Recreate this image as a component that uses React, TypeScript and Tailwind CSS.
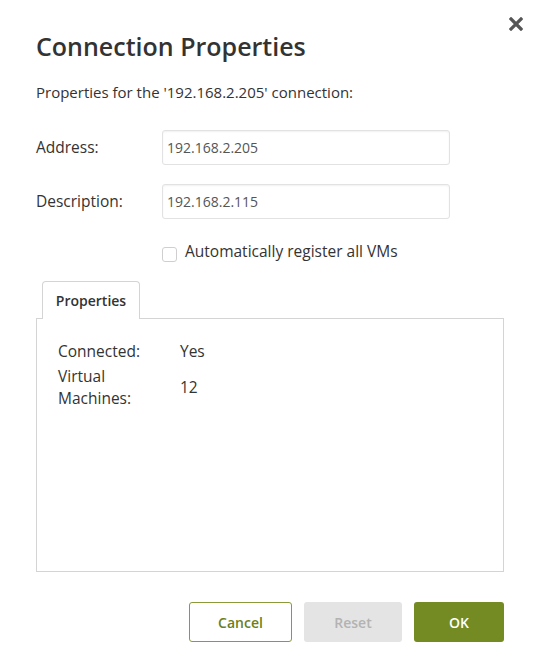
import React from "react";

export default function App() {
  return (
    <div
      className="w-[540px] h-[672px] bg-white relative text-[#333333]"
      style={{ fontFamily: '"Open Sans", "Liberation Sans", sans-serif' }}
    >
      <button className="absolute left-[508px] top-[16px] w-[16px] h-[16px] flex items-center justify-center">
        <svg width="14" height="14" viewBox="0 0 14 14">
          <path d="M2 2 L12 12 M12 2 L2 12" stroke="#555555" strokeWidth="3.2" strokeLinecap="square" />
        </svg>
      </button>
      <div className="pt-[29px] px-[36px]">
        <h1 className="text-[25px] leading-[34px] font-semibold text-[#333333]">Connection Properties</h1>
        <p className="mt-[19px] text-[15px] leading-[20px]">Properties for the '192.168.2.205' connection:</p>

        <div className="mt-[28px] flex items-center h-[35px]">
          <label className="w-[126px] text-[15.5px]">Address:</label>
          <div className="w-[288px] h-[35px] border border-[#e2e2e2] rounded-[3px] shadow-[inset_0_1px_2px_rgba(0,0,0,0.06)] flex items-center px-[4px] text-[14px] text-[#555555]">
            192.168.2.205
          </div>
        </div>
        <div className="mt-[19px] flex items-center h-[35px]">
          <label className="w-[126px] text-[15.5px]">Description:</label>
          <div className="w-[288px] h-[35px] border border-[#e2e2e2] rounded-[3px] shadow-[inset_0_1px_2px_rgba(0,0,0,0.06)] flex items-center px-[4px] text-[14px] text-[#555555]">
            192.168.2.115
          </div>
        </div>
        <div className="mt-[23px] ml-[126px] flex items-center h-[20px]">
          <span className="w-[15px] h-[15px] border border-[#cfcfcf] rounded-[3px] mt-[4px] bg-white shrink-0" />
          <span className="ml-[8px] text-[15.5px]">Automatically register all VMs</span>
        </div>

        <div className="mt-[19px] flex pl-[6px]">
          <div className="w-[98px] h-[38px] border border-[#d4d4d4] border-b-0 rounded-t-[4px] bg-white flex items-center justify-center text-[14px] font-semibold -mb-px relative z-10">
            Properties
          </div>
        </div>
        <div className="h-[254px] border border-[#d4d4d4] px-[21px] pt-[21px]">
          <div className="flex text-[15.5px] leading-[22px]">
            <div className="w-[122px]">Connected:</div>
            <div>Yes</div>
          </div>
          <div className="flex items-center text-[15.5px] leading-[22px] mt-[3px]">
            <div className="w-[122px]">
              Virtual
              <br />
              Machines:
            </div>
            <div>12</div>
          </div>
        </div>

        <div className="mt-[30px] flex justify-end gap-[12px]">
          <button className="w-[103px] h-[40px] border border-[#8a9a3a] rounded-[3px] bg-white text-[14px] font-semibold text-[#6b7f1c]">
            Cancel
          </button>
          <button className="w-[98px] h-[40px] rounded-[3px] bg-[#e4e4e4] text-[14px] font-semibold text-[#b3b3b3]">
            Reset
          </button>
          <button className="w-[90px] h-[40px] rounded-[3px] bg-[#738b22] text-[14px] font-semibold text-white">
            OK
          </button>
        </div>
      </div>
    </div>
  );
}
